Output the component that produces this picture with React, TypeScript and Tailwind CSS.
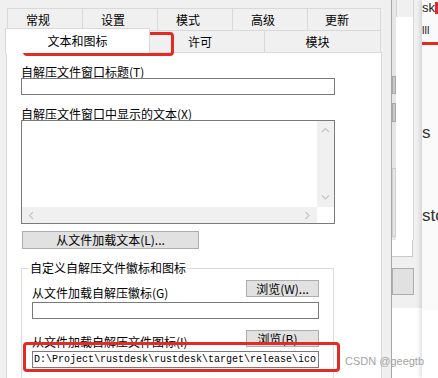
import React from "react";

type Dir = "up" | "down" | "left" | "right";

function Chev({ dir }: { dir: Dir }) {
  const pts = {
    up: "1,5 4.5,1.5 8,5",
    down: "1,1.5 4.5,5 8,1.5",
    left: "5,1 1.5,4.5 5,8",
    right: "1.5,1 5,4.5 1.5,8",
  }[dir];
  const vertical = dir === "up" || dir === "down";
  return (
    <svg
      width={vertical ? 9 : 7}
      height={vertical ? 7 : 9}
      viewBox={vertical ? "0 0 9 7" : "0 0 7 9"}
      fill="none"
      stroke="#c4c4c4"
      strokeWidth="1.2"
    >
      <polyline points={pts} />
    </svg>
  );
}

const row1 = ["常规", "设置", "模式", "高级", "更新"];

export default function App() {
  return (
    <div className="relative w-[438px] h-[378px] overflow-hidden bg-[#f0f0f0] flex font-['Noto_Sans_CJK_SC',sans-serif] text-[12px] text-black">
      {/* Dialog */}
      <div className="w-[392px] h-full border-r border-[#a8a8a8] bg-[#f0f0f0] flex flex-col pt-[8px] shrink-0">
        {/* Tab row 1 */}
        <div className="flex ml-[7px] h-[22px] shrink-0">
          {row1.map((t, i) => (
            <div
              key={t}
              className={
                i === 4
                  ? "w-[74px] h-full border-t border-l border-r border-[#d9d9d9] flex items-center justify-center pr-[14px] pt-[1px] leading-[14px]"
                  : "w-[75px] h-full border-t border-l border-[#d9d9d9] flex items-center justify-center pr-[14px] pt-[1px] leading-[14px]"
              }
            >
              {t}
            </div>
          ))}
        </div>
        {/* Tab row 2 */}
        <div className="flex items-end ml-[5px] h-[22px] shrink-0 relative z-10">
          <div className="w-[145px] h-[25px] -mb-[1px] bg-white border-t border-l border-r border-[#d9d9d9] flex items-center justify-center leading-[14px]">
            文本和图标
          </div>
          <div className="w-[114px] h-[22px] border-t border-[#d9d9d9] flex items-center justify-center pr-[14px] leading-[14px]">
            许可
          </div>
          <div className="w-[117px] h-[22px] border-t border-l border-r border-[#d9d9d9] flex items-center justify-center pr-[10px] leading-[14px]">
            模块
          </div>
        </div>
        {/* Panel */}
        <div className="flex-1 min-h-0 overflow-hidden ml-[6px] w-[376px] bg-white border-l border-t border-r border-[#d9d9d9]">
          <div className="flex flex-col pl-[14px]">
            <div className="mt-[12px] h-[13px] leading-[13px] whitespace-nowrap">自解压文件窗口标题(T)</div>
            <div className="w-[314px] h-[17px] border border-[#7a7a7a] bg-white" />
            <div className="mt-[12px] h-[13px] leading-[13px] whitespace-nowrap">自解压文件窗口中显示的文本(X)</div>
            <div className="w-[314px] h-[104px] border border-[#7a7a7a] bg-white flex flex-col">
              <div className="flex flex-1">
                <div className="flex-1" />
                <div className="w-[17px] bg-[#f0f0f0] flex flex-col justify-between items-center py-[6px]">
                  <Chev dir="up" />
                  <Chev dir="down" />
                </div>
              </div>
              <div className="flex h-[16px]">
                <div className="flex-1 bg-[#f0f0f0] flex items-center justify-between px-[6px]">
                  <Chev dir="left" />
                  <Chev dir="right" />
                </div>
                <div className="w-[17px] bg-white" />
              </div>
            </div>
            <div className="mt-[7px] ml-[1px] w-[177px] h-[18px] bg-[#e1e1e1] border border-[#adadad] flex items-center justify-center leading-[14px] whitespace-nowrap">
              从文件加载文本(L)...
            </div>
            {/* Group box */}
            <fieldset className="mt-[12px] w-[313px] border border-[#dcdcdc] pl-[10px] pr-[14px] pb-[20px] m-0 min-w-0">
              <legend className="-ml-[3px] px-[1px] leading-[14px] whitespace-nowrap">自定义自解压文件徽标和图标</legend>
              <div className="mt-[5px] flex items-end justify-between w-[287px]">
                <div className="h-[13px] leading-[13px] -mb-[2px] whitespace-nowrap">从文件加载自解压徽标(G)</div>
                <div className="w-[73px] h-[17px] bg-[#e1e1e1] border border-[#adadad] flex items-center justify-center leading-[14px] whitespace-nowrap">
                  浏览(W)...
                </div>
              </div>
              <div className="mt-[5px] w-[287px] h-[17px] border border-[#7a7a7a] bg-white" />
              <div className="mt-[11px] flex items-end justify-between w-[287px]">
                <div className="h-[13px] leading-[13px] -mb-[1px] whitespace-nowrap">从文件加载自解压文件图标(I)</div>
                <div className="w-[73px] h-[17px] bg-[#e1e1e1] border border-[#adadad] flex items-center justify-center leading-[14px] whitespace-nowrap">
                  浏览(B)...
                </div>
              </div>
              <div className="mt-[4px] w-[287px] h-[17px] border border-[#7a7a7a] bg-white flex items-center pl-[1px] overflow-hidden whitespace-nowrap font-['Liberation_Mono',monospace] text-[10px] leading-[12px]">
                D:\Project\rustdesk\rustdesk\target\release\ico
              </div>
            </fieldset>
          </div>
        </div>
      </div>

      {/* Background window B */}
      <div className="w-[30px] h-full flex flex-col shrink-0">
        <div className="h-[240px] flex shrink-0">
          <div className="w-[4px] bg-[#e6e6e6] flex flex-col">
            <div className="mt-[76px] h-[18px] bg-[#c8c8c8] border border-[#a8a8a8]" />
            <div className="mt-[9px] h-[19px] bg-[#c8c8c8] border border-[#a8a8a8]" />
            <div className="mt-[46px] h-[69px] border border-[#cfcfcf]" />
          </div>
          <div className="w-[17px] bg-white flex flex-col">
            <div className="h-[17px] bg-[#f0f0f0] border-l border-[#d4d4d4]" />
          </div>
          <div className="w-[9px] bg-[#f0f0f0] border-l border-[#d8d8d8]" />
        </div>
        <div className="h-[17px] flex shrink-0">
          <div className="w-[21px] bg-white border-r border-b border-[#c8c8c8]" />
          <div className="w-[9px] bg-[#f0f0f0]" />
        </div>
        <div className="h-[51px] bg-[#f0f0f0] flex flex-col shrink-0">
          <div className="mt-[11px] w-[22px] h-[27px] bg-[#e1e1e1] border border-[#adadad]" />
        </div>
        <div className="flex-1 bg-white" />
      </div>

      {/* Background window C */}
      <div className="w-[16px] h-full bg-[#fafafa] shadow-[-2px_0_4px_rgba(0,0,0,0.12)] flex flex-col overflow-hidden whitespace-nowrap font-['Liberation_Sans',sans-serif] shrink-0">
        <div className="h-[15px] leading-[15px] text-[13px] text-[#222] shrink-0">sk.p</div>
        <div className="mt-[9px] h-[12px] leading-[12px] text-[11px] text-[#222] shrink-0">lll</div>
        <div className="mt-[6px] h-[3px] bg-[#e32b25] shrink-0" />
        <div className="mt-[78px] h-[20px] leading-[20px] text-[17px] text-[#333] shrink-0">s</div>
        <div className="mt-[63px] h-[20px] leading-[20px] text-[17px] text-[#333] shrink-0">sto</div>
        <div className="flex-1 bg-white mt-[84px]" />
      </div>

      {/* Red annotation boxes */}
      <div className="absolute left-[23px] top-[32px] w-[151px] h-[24px] border-[3px] border-[#e32b25] rounded-[4px]" />
      <div className="absolute left-[23px] top-[342px] w-[317px] h-[30px] border-[3px] border-[#e32b25] rounded-[4px]" />
      <div className="absolute left-[435px] top-[2px] w-[3px] h-[12px] bg-[#e32b25]" />

      {/* Watermark */}
      <div className="absolute left-[345px] top-[355px] text-[11px] leading-[13px] text-[#a3a3a3] font-['Liberation_Sans',sans-serif] whitespace-nowrap">
        CSDN @geegtb
      </div>
    </div>
  );
}
